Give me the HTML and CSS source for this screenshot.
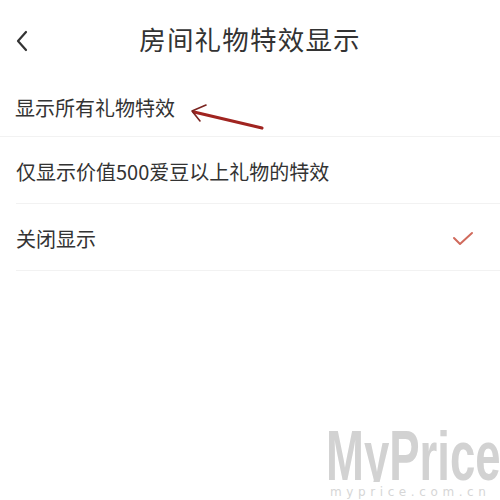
FILE: index.html
```html
<!DOCTYPE html>
<html lang="zh-CN">
<head>
    <meta charset="UTF-8">
    <title>房间礼物特效显示</title>
    <link rel="stylesheet" href="styles.css">
</head>
<body>
    <div class="page">
        <div class="header">
            <span class="back">
                <svg width="14" height="22" viewBox="0 0 14 22">
                    <path d="M11 2 L3 11 L11 20" fill="none" stroke="#333" stroke-width="2.2" stroke-linecap="round" stroke-linejoin="round"/>
                </svg>
            </span>
            <h2>房间礼物特效显示</h2>
        </div>

        <div class="option-list">
            <div class="option first">
                <span>显示所有礼物特效</span>
            </div>
            <div class="option">
                <span>仅显示价值500爱豆以上礼物的特效</span>
            </div>
            <div class="option">
                <span>关闭显示</span>
                <svg class="check" width="22" height="16" viewBox="0 0 22 16">
                    <path d="M2 7 L8 13 L20 2" fill="none" stroke="#d06a5c" stroke-width="2" stroke-linecap="round" stroke-linejoin="round"/>
                </svg>
            </div>
        </div>

        <!-- 标注箭头 -->
        <svg class="arrow" width="80" height="30" viewBox="0 0 80 30">
            <path d="M72 25 L4 9" stroke="#a02420" stroke-width="3.2" stroke-linecap="round"/>
            <path d="M2 8 L16 2 M2 8 L10 18" stroke="#7a2420" stroke-width="1.6" stroke-linecap="round" fill="none"/>
        </svg>

        <div class="watermark">
            <div class="wm-big">MyPrice</div>
            <div class="wm-small">myprice.com.cn</div>
        </div>
    </div>
</body>
</html>
```

FILE: styles.css
```css
body {
    margin: 0;
    background-color: #fff;
    font-family: "Noto Sans CJK SC", "Noto Sans", sans-serif;
    color: #333;
}
.page {
    position: relative;
    width: 500px;
    height: 500px;
    overflow: hidden;
}
.header {
    height: 72px;
    display: flex;
    align-items: center;
    justify-content: center;
    position: relative;
    padding-top: 2px;
}
.back {
    position: absolute;
    left: 15px;
    top: 30px;
}
.header h2 {
    margin: 0;
    font-size: 26.5px;
    font-weight: 400;
    color: #333;
    letter-spacing: 1.2px;
}
.option {
    height: 67px;
    display: flex;
    align-items: center;
    justify-content: space-between;
    margin-left: 16px;
    padding-right: 26px;
    border-bottom: 1px solid #f2f2f2;
    font-size: 20px;
    color: #333;
    padding-top: 3px;
    box-sizing: border-box;
}
.option.first {
    height: 63px;
    margin-left: 0;
    padding-left: 15px;
}
.option.first span {
    margin-top: 2px;
}
.arrow {
    position: absolute;
    left: 190px;
    top: 103px;
}
.watermark {
    position: absolute;
    left: 326px;
    top: 430px;
    width: 174px;
    white-space: nowrap;
}
.wm-big {
    font-family: "Liberation Sans", sans-serif;
    font-weight: bold;
    font-size: 70px;
    line-height: 53px;
    color: #d2d2d2;
    transform: scaleX(0.65);
    transform-origin: left;
    clip-path: inset(0 -300px 1px 0);
}
.wm-small {
    font-family: "DejaVu Sans", sans-serif;
    font-size: 12px;
    line-height: 14px;
    letter-spacing: 4.6px;
    color: #d6d6d6;
    margin-left: 4px;
    margin-top: 2px;
}
```
